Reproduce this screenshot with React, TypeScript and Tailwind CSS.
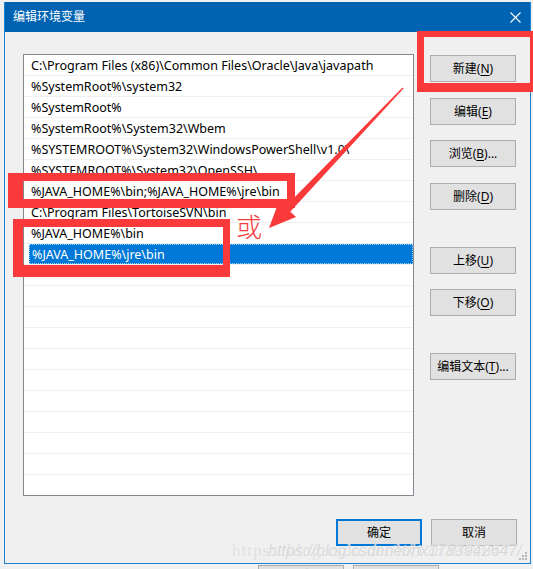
import React from "react";

const rows = [
  "C:\\Program Files (x86)\\Common Files\\Oracle\\Java\\javapath",
  "%SystemRoot%\\system32",
  "%SystemRoot%",
  "%SystemRoot%\\System32\\Wbem",
  "%SYSTEMROOT%\\System32\\WindowsPowerShell\\v1.0\\",
  "%SYSTEMROOT%\\System32\\OpenSSH\\",
  "%JAVA_HOME%\\bin;%JAVA_HOME%\\jre\\bin",
  "C:\\Program Files\\TortoiseSVN\\bin",
  "%JAVA_HOME%\\bin",
  "%JAVA_HOME%\\jre\\bin",
  "", "", "", "", "", "", "", "", "", "", "", "",
];

const font = { fontFamily: '"Noto Sans", "Noto Sans CJK SC", sans-serif' };

function Btn({ label, k, rest, extra }: { label: string; k: string; rest?: string; extra: string }) {
  return (
    <div className={`flex h-[27px] w-[86px] items-center justify-center border border-[#adadad] bg-[#e1e1e1] text-[12px] leading-none text-black ${extra}`}>
      <span>
        {label}(<span className="underline underline-offset-2">{k}</span>){rest}
      </span>
    </div>
  );
}

export default function App() {
  return (
    <div className="relative h-[569px] w-[533px] overflow-hidden bg-[#f0f0f0]" style={font}>
      <div className="ml-[4px] mt-[2px] flex h-[562px] w-[527px] flex-col border border-t-0 border-[#1883d7] bg-[#f0f0f0]">
        <div className="flex h-[30px] items-center justify-between bg-[#0063b1] pl-[8px] pr-[9px] text-[12px] text-white">
          <span>编辑环境变量</span>
          <svg width="11" height="11" viewBox="0 0 11 11">
            <path d="M0.5 0.5 L10.5 10.5 M10.5 0.5 L0.5 10.5" stroke="white" strokeWidth="1.1" />
          </svg>
        </div>
        <div className="relative flex flex-1 flex-col pl-[18px] pr-[13px] pt-[22px]">
          <div className="flex">
            <div className="h-[442px] w-[391px] overflow-hidden border border-[#828790] bg-white">
              {rows.map((r, i) =>
                i === 9 ? (
                  <div key={i} className="flex h-[21px] items-center border-b border-[#f0f0f0] pl-[5px]">
                    <div className="flex h-[20px] w-full items-center border border-dotted border-[#9ad0ff] bg-[#0078d7] pl-[2px] pt-[2px] text-[12.5px] text-white">
                      {r}
                    </div>
                  </div>
                ) : (
                  <div key={i} className="flex h-[21px] items-center border-b border-[#f0f0f0] pl-[7px] pt-[2px] text-[12.5px] text-black">
                    {r}
                  </div>
                )
              )}
            </div>
            <div className="ml-[16px] flex flex-col pt-[1px]">
              <Btn label="新建" k="N" extra="" />
              <Btn label="编辑" k="E" extra="mt-[16px]" />
              <Btn label="浏览" k="B" rest="..." extra="mt-[15px]" />
              <Btn label="删除" k="D" extra="mt-[16px]" />
              <Btn label="上移" k="U" extra="mt-[37px]" />
              <Btn label="下移" k="O" extra="mt-[15px]" />
              <Btn label="编辑文本" k="T" rest="..." extra="mt-[37px]" />
            </div>
          </div>
          <div className="mt-[23px] flex justify-end gap-[9px]">
            <div className="flex h-[27px] w-[86px] items-center justify-center border-2 border-[#0078d7] bg-[#e1e1e1] text-[12px] text-black">确定</div>
            <div className="flex h-[27px] w-[86px] items-center justify-center border border-[#adadad] bg-[#e1e1e1] text-[12px] text-black">取消</div>
          </div>
          <svg className="absolute bottom-[2px] right-[2px]" width="9" height="9" viewBox="0 0 9 9">
            <rect x="6" y="0" width="2" height="2" fill="#b8b8b8" />
            <rect x="3" y="3" width="2" height="2" fill="#b8b8b8" />
            <rect x="6" y="3" width="2" height="2" fill="#b8b8b8" />
            <rect x="0" y="6" width="2" height="2" fill="#b8b8b8" />
            <rect x="3" y="6" width="2" height="2" fill="#b8b8b8" />
            <rect x="6" y="6" width="2" height="2" fill="#b8b8b8" />
          </svg>
        </div>
      </div>
      <div className="flex pl-[258px] pt-[1px]">
        <div className="flex h-[20px] w-[86px] justify-center border border-[#adadad] bg-[#e1e1e1] pt-[1px] text-[12px] text-black">确定</div>
        <div className="ml-[9px] flex h-[20px] w-[86px] justify-center border border-[#adadad] bg-[#e1e1e1] pt-[1px] text-[12px] text-black">取消</div>
      </div>

      {/* annotations */}
      <div className="absolute left-[8px] top-[173px] h-[35px] w-[287px] border-b-[9px] border-l-[15px] border-r-[8px] border-t-[8px] border-[#fa3a3a]" />
      <div className="absolute left-[13px] top-[219px] h-[58px] w-[217px] border-b-[12px] border-l-[10px] border-r-[7px] border-t-[8px] border-[#fa3a3a]" />
      <div className="absolute left-[417px] top-[31px] h-[61px] w-[116px] border-b-[9px] border-l-[7px] border-r-[3px] border-t-[6px] border-[#fa3a3a]" />
      <svg className="absolute left-0 top-0" width="533" height="569" viewBox="0 0 533 569">
        <polygon points="269,228 279,201 296,217" fill="#fa3a3a" />
        <polygon points="285,207 290,212 403.5,88.5 402.5,87.5" fill="#fa3a3a" />
      </svg>
      <div
        className="absolute left-[236px] top-[213px] text-[26px] font-light leading-none text-[#f53c3c]"
        style={{ fontFamily: '"Noto Sans CJK SC", sans-serif' }}
      >
        或
      </div>
      <div
        className="absolute left-[232px] top-[538px] text-[17px] tracking-[1px] text-[#d0d0d0]/70"
        style={{ fontFamily: '"Liberation Serif", serif', textShadow: "0 0 1px #ffffff" }}
      >
        https://blog.csdn.net/hx1783942647
      </div>
      <div
        className="absolute left-[268px] top-[539px] text-[16px] italic text-[#c8c8c8]/70"
        style={{ fontFamily: '"Liberation Sans", sans-serif', textShadow: "0 0 1px #ffffff" }}
      >
        https://blog.csdnnet/hx1783942647/
      </div>
    </div>
  );
}
